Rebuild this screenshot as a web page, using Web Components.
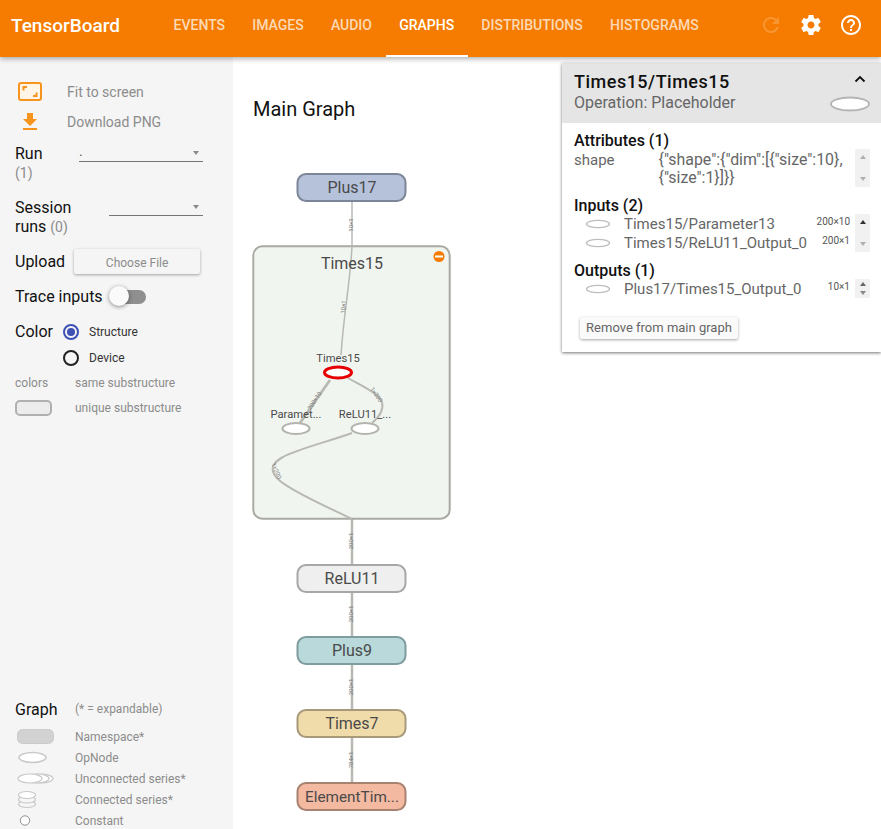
<!DOCTYPE html>
<html>
<head>
<meta charset="utf-8">
<title>TensorBoard</title>
<style>
  html, body { margin: 0; height: 100%; overflow: hidden; background: #fff; }
  body { font-family: Roboto, "Liberation Sans", sans-serif; }
</style>
</head>
<body>
<tb-app>
  <tb-header slot="header">
    <tb-tab>Events</tb-tab>
    <tb-tab>Images</tb-tab>
    <tb-tab>Audio</tb-tab>
    <tb-tab active>Graphs</tb-tab>
    <tb-tab>Distributions</tb-tab>
    <tb-tab>Histograms</tb-tab>
  </tb-header>
  <tb-sidebar slot="sidebar"></tb-sidebar>
  <tb-graph slot="main"></tb-graph>
  <tb-info-card slot="main"></tb-info-card>
</tb-app>

<script>
const ICONS = {
  refresh: "M17.65 6.35C16.2 4.9 14.21 4 12 4c-4.42 0-7.99 3.58-7.99 8s3.57 8 7.99 8c3.73 0 6.84-2.55 7.73-6h-2.08c-.82 2.33-3.04 4-5.65 4-3.31 0-6-2.69-6-6s2.69-6 6-6c1.66 0 3.14.69 4.22 1.78L13 11h7V4l-2.35 2.35z",
  settings: "M19.43 12.98c.04-.32.07-.64.07-.98s-.03-.66-.07-.98l2.11-1.65c.19-.15.24-.42.12-.64l-2-3.46c-.12-.22-.39-.3-.61-.22l-2.49 1c-.52-.4-1.08-.73-1.69-.98l-.38-2.65C14.46 2.18 14.25 2 14 2h-4c-.25 0-.46.18-.49.42l-.38 2.65c-.61.25-1.17.59-1.69.98l-2.49-1c-.23-.09-.49 0-.61.22l-2 3.46c-.13.22-.07.49.12.64l2.11 1.65c-.04.32-.07.65-.07.98s.03.66.07.98l-2.11 1.65c-.19.15-.24.42-.12.64l2 3.46c.12.22.39.3.61.22l2.49-1c.52.4 1.08.73 1.69.98l.38 2.65c.03.24.24.42.49.42h4c.25 0 .46-.18.49-.42l.38-2.65c.61-.25 1.17-.59 1.69-.98l2.49 1c.23.09.49 0 .61-.22l2-3.46c.12-.22.07-.49-.12-.64l-2.11-1.65zM12 15.5c-1.93 0-3.5-1.57-3.5-3.5s1.57-3.5 3.5-3.5 3.5 1.57 3.5 3.5-1.57 3.5-3.5 3.5z",
  help: "M11 18h2v-2h-2v2zm1-16C6.48 2 2 6.48 2 12s4.48 10 10 10 10-4.48 10-10S17.52 2 12 2zm0 18c-4.41 0-8-3.59-8-8s3.59-8 8-8 8 3.59 8 8-3.59 8-8 8zm0-14c-2.21 0-4 1.79-4 4h2c0-1.1.9-2 2-2s2 .9 2 2c0 2-3 1.75-3 5h2c0-2.25 3-2.5 3-5 0-2.21-1.79-4-4-4z",
  download: "M19 9h-4V3H9v6H5l7 7 7-7zM5 18v2h14v-2H5z"
};

function icon(name) {
  return `<svg width="24" height="24" viewBox="0 0 24 24"><path d="${ICONS[name]}"/></svg>`;
}

class TbApp extends HTMLElement {
  constructor() {
    super();
    this.attachShadow({ mode: "open" }).innerHTML = `
      <style>
        :host { display: flex; flex-direction: column; height: 829px; overflow: hidden; }
        .body { flex: 1; display: flex; min-height: 0; }
        .main { flex: 1; position: relative; min-width: 0; background: #fff; }
      </style>
      <slot name="header"></slot>
      <div class="body">
        <slot name="sidebar"></slot>
        <div class="main"><slot name="main"></slot></div>
      </div>`;
  }
}

class TbHeader extends HTMLElement {
  constructor() {
    super();
    this.attachShadow({ mode: "open" }).innerHTML = `
      <style>
        :host {
          display: flex; align-items: stretch; height: 57px; flex: none;
          background: #f57c00; color: #fff; position: relative; z-index: 2;
          box-shadow: 0 2px 5px rgba(0,0,0,.3);
        }
        .title { font-size: 19px; font-weight: 500; line-height: 51px; margin-left: 11px; width: 149px; }
        .tabs { display: flex; flex: 1; }
        .icons { display: flex; align-items: center; padding: 0 10px 7px 0; }
        .icons span { width: 40px; height: 24px; display: flex; justify-content: center; }
        svg { display: block; fill: #fff; }
        .off svg { opacity: .2; }
      </style>
      <div class="title">TensorBoard</div>
      <div class="tabs"><slot></slot></div>
      <div class="icons">
        <span class="off">${icon("refresh")}</span>
        <span>${icon("settings")}</span>
        <span>${icon("help")}</span>
      </div>`;
  }
}

class TbTab extends HTMLElement {
  constructor() {
    super();
    this.attachShadow({ mode: "open" }).innerHTML = `
      <style>
        :host {
          display: block; padding: 0 13.6px; box-sizing: border-box;
          font-size: 14px; font-weight: 500; line-height: 51px; text-transform: uppercase;
          color: rgba(255,255,255,.72); border-bottom: 2px solid transparent; height: 57px;
        }
        :host([active]) { color: #fff; border-bottom-color: #fff; }
      </style>
      <slot></slot>`;
  }
}

class TbSelect extends HTMLElement {
  constructor() {
    super();
    this.attachShadow({ mode: "open" }).innerHTML = `
      <style>
        :host {
          display: block; height: 18px; box-sizing: border-box; position: relative;
          border-bottom: 1px solid #757575; font-size: 14px; color: #555; line-height: 15px;
        }
        :host::after {
          content: ""; position: absolute; right: 4px; top: 7px;
          border: 3.5px solid transparent; border-top: 4px solid #8a8a8a; border-bottom: 0;
        }
      </style>
      <slot></slot>`;
  }
}

class TbLegendRow extends HTMLElement {
  constructor() {
    super();
    this.attachShadow({ mode: "open" }).innerHTML = `
      <style>
        :host {
          display: grid; grid-template-columns: 60px 1fr; align-items: center;
          height: 21px; font-size: 12px; color: #8c8c8c;
        }
        ::slotted(svg) { display: block; }
      </style>
      <slot name="icon"></slot>
      <div><slot></slot></div>`;
  }
}

class TbSidebar extends HTMLElement {
  constructor() {
    super();
    this.attachShadow({ mode: "open" }).innerHTML = `
      <style>
        :host {
          display: flex; flex-direction: column; width: 233px; flex: none; box-sizing: border-box;
          background: #f5f5f5; padding: 20px 30px 0 15px; font-size: 16px; color: #111; overflow: hidden;
        }
        .action { display: flex; align-items: center; height: 30px; font-size: 14px; color: #8c8c8c; }
        .action svg { margin: 0 25px 0 3px; display: block; fill: #f7941d; flex: none; }
        .count { font-size: 14px; color: #8c8c8c; }
        .run { margin-top: 6px; }
        .run-line { display: grid; grid-template-columns: 64px 1fr; height: 20px; line-height: 22px; }
        .run-line tb-select { margin-top: 1px; }
        .run-count { line-height: 20px; }
        .session { margin-top: 14px; display: grid; grid-template-columns: 94px 1fr; line-height: 19px; padding-top: 1px; height: 40px; box-sizing: border-box; }
        .session tb-select { margin-top: 0; }
        .upload { margin-top: 12px; display: flex; align-items: center; height: 25px; }
        .upload .btn {
          margin-left: 9px; width: 126px; height: 25px; line-height: 29px; text-align: center; background: #f5f5f5;
          font-size: 12px; color: #8c8c8c; border-radius: 2px; box-shadow: 0 1px 3px rgba(0,0,0,.35);
        }
        .trace { margin-top: 10px; display: flex; align-items: center; height: 24px; }
        .toggle { position: relative; width: 37px; height: 24px; margin-left: 6px; }
        .toggle .track { position: absolute; left: 6px; right: 0; top: 6px; height: 14px; border-radius: 7px; background: #8f8f8f; }
        .toggle .knob {
          position: absolute; left: 0; top: 2px; width: 20px; height: 20px; border-radius: 50%;
          background: #fafafa; box-shadow: 0 1px 4px rgba(0,0,0,.45);
        }
        .color { margin-top: 11px; display: grid; grid-template-columns: 48px 1fr; }
        .color .name { line-height: 26px; }
        .radio { display: flex; align-items: center; height: 26px; font-size: 12px; color: #333; }
        .radio i { width: 12px; height: 12px; border: 2px solid #212121; border-radius: 50%; margin-right: 10px; position: relative; display: block; }
        .radio.on i { border-color: #3f51b5; }
        .radio.on i::after { content: ""; position: absolute; inset: 2px; border-radius: 50%; background: #3f51b5; }
        .swatches { margin-top: 4px; display: grid; gap: 9px 0; }
        .swatches tb-legend-row { height: 16px; }
        .swatches .ss { width: 33px; height: 12px; background: #ececec; border: 2px solid #b0b0b0; border-radius: 5px; }
        .legend { margin-top: auto; margin-bottom: -2px; }
        .legend-title { display: grid; grid-template-columns: 60px 1fr; align-items: center; height: 22px; }
        .legend-title span { font-size: 12px; color: #8c8c8c; }
        .legend-title + tb-legend-row { margin-top: 6px; }
      </style>
      <div class="action">
        <svg width="24" height="24" viewBox="0 0 24 24">
          <rect x="1" y="3" width="22" height="17" rx="2" fill="#fff5e6" stroke="#f7941d" stroke-width="2"/>
          <path d="M4.5 6h4.5v2H6.5v2.500h-2zM19.5 17h-4.500v-2h2.500v-2.500h2z" fill="#f7941d"/>
        </svg>
        Fit to screen
      </div>
      <div class="action">${icon("download")}Download PNG</div>
      <div class="run">
        <div class="run-line"><div>Run</div><tb-select>.</tb-select></div>
        <div class="count run-count">(1)</div>
      </div>
      <div class="session">
        <div>Session<br>runs <span class="count">(0)</span></div>
        <tb-select></tb-select>
      </div>
      <div class="upload">Upload<div class="btn">Choose File</div></div>
      <div class="trace">Trace inputs<div class="toggle"><div class="track"></div><div class="knob"></div></div></div>
      <div class="color">
        <div class="name">Color</div>
        <div>
          <div class="radio on"><i></i>Structure</div>
          <div class="radio"><i></i>Device</div>
        </div>
      </div>
      <div class="swatches">
        <tb-legend-row><span slot="icon">colors</span>same substructure</tb-legend-row>
        <tb-legend-row><div slot="icon" class="ss"></div>unique substructure</tb-legend-row>
      </div>
      <div class="legend">
        <div class="legend-title">Graph<span>(* = expandable)</span></div>
        <tb-legend-row>
          <svg slot="icon" width="40" height="17"><rect x="2.5" y="1.5" width="36" height="14" rx="5" fill="#d2d2d2" stroke="#cbcbcb"/></svg>
          Namespace*
        </tb-legend-row>
        <tb-legend-row>
          <svg slot="icon" width="40" height="17"><ellipse cx="17.5" cy="8.5" rx="13.5" ry="5" fill="#fff" stroke="#c9c9c9" stroke-width="1.5"/></svg>
          OpNode
        </tb-legend-row>
        <tb-legend-row>
          <svg slot="icon" width="42" height="17" fill="#fff" stroke="#c9c9c9" stroke-width="1.2">
            <ellipse cx="26" cy="8.5" rx="12" ry="4.5"/><ellipse cx="22" cy="8.5" rx="12" ry="4.5"/><ellipse cx="15" cy="8.5" rx="12" ry="4.5"/>
          </svg>
          Unconnected series*
        </tb-legend-row>
        <tb-legend-row>
          <svg slot="icon" width="40" height="19" fill="#f5f5f5" stroke="#c9c9c9" stroke-width="1.2">
            <ellipse cx="12" cy="14" rx="8.5" ry="3.5"/><ellipse cx="12" cy="9.5" rx="8.5" ry="3.5"/><ellipse cx="12" cy="5" rx="8.5" ry="3.5" fill="#fff"/>
          </svg>
          Connected series*
        </tb-legend-row>
        <tb-legend-row>
          <svg slot="icon" width="40" height="17"><circle cx="10" cy="8.5" r="4.7" fill="#fff" stroke="#8f8f8f"/></svg>
          Constant
        </tb-legend-row>
      </div>`;
  }
}

const METANODES = [
  ["Plus17", 173, "#b6c1da", "#7d8699", 16],
  ["ReLU11", 564, "#efefef", "#a7a7a7", 16],
  ["Plus9", 636, "#b9d9da", "#7f9c9e", 16],
  ["Times7", 709, "#f0dcaa", "#a8997a", 16],
  ["ElementTim...", 782, "#f3b9a1", "#a88270", 15.3]
];

// edge label: text, x, y, angle
const EDGE_LABELS = [
  ["10×1", 351, 225, -90],
  ["10×1", 344, 307, -85],
  ["200×10", 315, 401, -57],
  ["1×200", 376, 395, 55],
  ["1×200", 276, 471, 68],
  ["200×1", 351, 541, -90],
  ["200×1", 351, 614, -90],
  ["200×1", 351, 687, -90],
  ["784×1", 351, 760, -90]
];

class TbGraph extends HTMLElement {
  constructor() {
    super();
    const nodes = METANODES.map(([name, y, fill, stroke, size]) => `
      <rect x="297.5" y="${y + 1}" width="108" height="27" rx="8.5" fill="${fill}" stroke="${stroke}" stroke-width="2"/>
      <text x="352" y="${y + 19.5}" text-anchor="middle" font-size="${size}">${name}</text>`).join("");
    const labels = EDGE_LABELS.map(([t, x, y, a]) =>
      `<text class="lbl" x="${x}" y="${y}" transform="rotate(${a} ${x} ${y})" text-anchor="middle" dominant-baseline="middle">${t}</text>`).join("");
    this.attachShadow({ mode: "open" }).innerHTML = `
      <style>
        :host { display: block; width: 648px; height: 772px; }
        svg { display: block; font-family: Roboto, "Liberation Sans", sans-serif; }
        text { fill: #4a4a4a; }
        .title { fill: #111; font-size: 20px; }
        .lbl { font-size: 6px; fill: #777; }
        .edge { fill: none; stroke: #b9b9b4; }
      </style>
      <svg width="648" height="772" viewBox="233 57 648 772">
        <text class="title" x="253" y="116">Main Graph</text>
        <path class="edge" stroke-width="2.5" d="M352 519V782"/>
        <path class="edge" stroke-width="1.5" d="M352 201V246"/>
        <rect x="253.3" y="246.3" width="196.4" height="272.4" rx="9" fill="#f1f5f0" stroke="#a9aaa1" stroke-width="2"/>
        <path class="edge" stroke-width="1.5" d="M352 246C350 285 344 310 341 355"/>
        <path class="edge" stroke-width="2.8" d="M330 380L300 423"/>
        <path class="edge" stroke-width="2" d="M348 378C362 386 378 393 382 402C384 410 378 418 372 423"/>
        <path class="edge" stroke-width="2" d="M352 433C330 441 295 450 283 457C270 464 270 472 279 480C292 492 330 508 352 519"/>
        ${nodes}
        <text x="352" y="268.5" text-anchor="middle" font-size="16">Times15</text>
        <circle cx="439" cy="256.5" r="5.5" fill="#f57c00"/>
        <rect x="435" y="255.5" width="8" height="2" fill="#fff"/>
        <text x="338" y="362" text-anchor="middle" font-size="11.2">Times15</text>
        <ellipse cx="338" cy="372.5" rx="13.5" ry="5.5" fill="#fff" stroke="#e60000" stroke-width="3"/>
        <text x="296" y="418" text-anchor="middle" font-size="11.2">Paramet...</text>
        <ellipse cx="296" cy="428.5" rx="13.5" ry="5.5" fill="#fff" stroke="#b4b4ae" stroke-width="2"/>
        <text x="365" y="418" text-anchor="middle" font-size="11.2">ReLU11_...</text>
        <ellipse cx="365" cy="428.5" rx="13.5" ry="5.5" fill="#fff" stroke="#b4b4ae" stroke-width="2"/>
        ${labels}
      </svg>`;
  }
}

class TbInfoRow extends HTMLElement {
  constructor() {
    super();
    this.attachShadow({ mode: "open" }).innerHTML = `
      <style>
        :host { display: grid; grid-template-columns: 50px 1fr auto; align-items: center; height: 19px; font-size: 15px; color: #666; }
        svg { display: block; margin-left: 11px; }
        .size { font-size: 10px; color: #555; padding: 0 1px 5px 0; }
      </style>
      <svg width="26" height="10"><ellipse cx="13" cy="5" rx="11.5" ry="3.7" fill="#fff" stroke="#bdbdbd" stroke-width="1.3"/></svg>
      <div><slot></slot></div>
      <div class="size">${this.getAttribute("size") || ""}</div>`;
  }
}

class TbScrollArrows extends HTMLElement {
  constructor() {
    super();
    this.attachShadow({ mode: "open" }).innerHTML = `
      <style>
        :host { display: flex; flex-direction: column; justify-content: space-between; align-items: center;
          width: 15px; background: #f1f1f1; box-sizing: border-box; padding: var(--pad, 6px) 0; }
        i { width: 0; height: 0; border: 3.5px solid transparent; display: block; }
        .up { border-top: 0; border-bottom: 4px solid var(--up, #b0b0b0); }
        .down { border-bottom: 0; border-top: 4px solid var(--down, #b0b0b0); }
      </style>
      <i class="up"></i><i class="down"></i>`;
  }
}

class TbInfoCard extends HTMLElement {
  constructor() {
    super();
    this.attachShadow({ mode: "open" }).innerHTML = `
      <style>
        :host {
          position: absolute; top: 6px; right: 0; width: 319px; height: 289px; background: #fff;
          box-shadow: 0 1px 3px rgba(0,0,0,.55); display: block; color: #111;
        }
        .head { position: relative; height: 60px; background: #e5e5e5; padding: 8px 12px 0; box-sizing: border-box; }
        .name { font-size: 18px; font-weight: 500; line-height: 21px; letter-spacing: .5px; margin-bottom: 1px; }
        .op { font-size: 16px; color: #666; line-height: 20px; }
        .chev { position: absolute; right: 15px; top: 12px; display: block; }
        .glyph { position: absolute; right: 10px; top: 32px; display: block; }
        .body { padding: 8px 11px 0 12px; }
        h3 { margin: 0 0 -1px; font-size: 16px; font-weight: 500; line-height: 19px; }
        .section { display: grid; grid-template-columns: 1fr 15px; column-gap: 4px; margin-bottom: 9px; }
        .section > h3 { grid-column: 1 / -1; }
        .section tb-scroll-arrows { grid-column: 2; grid-row: 2; }
        .rows { grid-column: 1; grid-row: 2; }
        .attr { display: grid; grid-template-columns: 84.5px 1fr; font-size: 15px; line-height: 18px; color: #666; padding-top: 2px; }
        .attr .json { font-size: 15.9px; white-space: nowrap; }
        .btn {
          margin: 19px 0 0 6px; width: 158px; height: 22px; line-height: 22px; text-align: center;
          font-size: 13px; color: #666; border-radius: 2px; background: #fafafa; box-shadow: 0 1px 3px rgba(0,0,0,.35);
        }
        .one { --up: #666; --down: #888; --pad: 3px; }
        .one2 { --up: #333; }
      </style>
      <div class="head">
        <div class="name">Times15/Times15</div>
        <div class="op">Operation: Placeholder</div>
        <svg class="chev" width="12" height="8" viewBox="0 0 12 8"><path d="M1.5 6.5L6 2l4.5 4.5" fill="none" stroke="#111" stroke-width="1.8"/></svg>
        <svg class="glyph" width="42" height="18"><ellipse cx="21" cy="9" rx="19" ry="6.5" fill="#fff" stroke="#b4b4b4" stroke-width="1.8"/></svg>
      </div>
      <div class="body">
        <div class="section">
          <h3>Attributes (1)</h3>
          <div class="rows attr"><div>shape</div><div class="json">{"shape":{"dim":[{"size":10},<br>{"size":1}]}}</div></div>
          <tb-scroll-arrows></tb-scroll-arrows>
        </div>
        <div class="section">
          <h3>Inputs (2)</h3>
          <div class="rows">
            <tb-info-row size="200×10">Times15/Parameter13</tb-info-row>
            <tb-info-row size="200×1">Times15/ReLU11_Output_0</tb-info-row>
          </div>
          <tb-scroll-arrows class="one2"></tb-scroll-arrows>
        </div>
        <div class="section">
          <h3>Outputs (1)</h3>
          <div class="rows"><tb-info-row size="10×1">Plus17/Times15_Output_0</tb-info-row></div>
          <tb-scroll-arrows class="one"></tb-scroll-arrows>
        </div>
        <div class="btn">Remove from main graph</div>
      </div>`;
  }
}

customElements.define("tb-app", TbApp);
customElements.define("tb-header", TbHeader);
customElements.define("tb-tab", TbTab);
customElements.define("tb-select", TbSelect);
customElements.define("tb-legend-row", TbLegendRow);
customElements.define("tb-sidebar", TbSidebar);
customElements.define("tb-graph", TbGraph);
customElements.define("tb-info-row", TbInfoRow);
customElements.define("tb-scroll-arrows", TbScrollArrows);
customElements.define("tb-info-card", TbInfoCard);
</script>
</body>
</html>
